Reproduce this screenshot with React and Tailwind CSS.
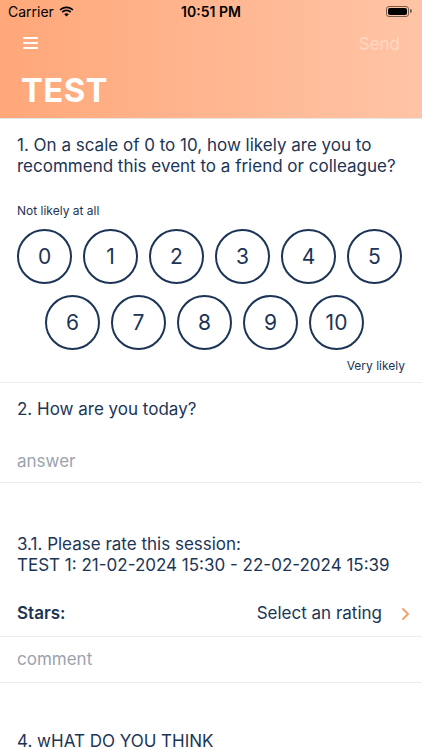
import React from 'react';

const navy = 'text-[#1c3556]';

function StatusBar() {
  return (
    <div className="h-[22px] flex items-center justify-between px-[8px] text-black text-[14px]">
      <div className="flex items-center gap-[5px] w-[120px]">
        <span>Carrier</span>
        {/* wifi */}
        <svg width="15" height="11" viewBox="0 0 15 11">
          <path d="M7.5 2.2c2.3 0 4.4.9 5.9 2.4l1.1-1.1C12.7 1.7 10.2.6 7.5.6S2.3 1.7.5 3.5l1.1 1.1C3.1 3.1 5.2 2.2 7.5 2.2z" fill="#000" />
          <path d="M7.5 5.2c1.4 0 2.7.6 3.7 1.5l1.1-1.1C11.1 4.4 9.4 3.6 7.5 3.6S3.9 4.4 2.7 5.6l1.1 1.1c1-.9 2.3-1.5 3.7-1.5z" fill="#000" />
          <path d="M7.5 10.6l2.3-2.3c-.6-.6-1.4-1-2.3-1s-1.7.4-2.3 1z" fill="#000" />
        </svg>
      </div>
      <span className="font-semibold">10:51 PM</span>
      <div className="w-[120px] flex justify-end pr-[2px]">
        <div className="flex items-center">
          <div className="w-[23px] h-[11px] rounded-[3px] border border-[#7a5a4a] p-[1px]">
            <div className="w-full h-full rounded-[2px] bg-black" />
          </div>
          <div className="w-[1.5px] h-[4px] bg-[#7a5a4a] rounded-r-sm ml-[1px]" />
        </div>
      </div>
    </div>
  );
}

function Header() {
  return (
    <div className="bg-gradient-to-r from-[#ffa779] to-[#ffc4a6] border-b border-[#e6e6e6]">
      <StatusBar />
      <div className="h-[42px] flex items-center justify-between pl-[23px] pr-[22px]">
        <div className="flex flex-col gap-[3px] w-[15px] -mt-[1px]">
          <div className="h-[2px] bg-white rounded" />
          <div className="h-[2px] bg-white rounded" />
          <div className="h-[2px] bg-white rounded" />
        </div>
        <span className="text-[17px] text-white/40 mt-[3px]">Send</span>
      </div>
      <div className="h-[54px] flex items-center px-[21px]">
        <h1 className="text-[33px] font-bold text-white tracking-[0.3px]">TEST</h1>
      </div>
    </div>
  );
}

function Circle({ n }) {
  return (
    <div className={`w-[55px] h-[55px] rounded-full border-2 border-[#1c3556] flex items-center justify-center text-[21px] ${navy}`}>
      {n}
    </div>
  );
}

export default function App() {
  return (
    <div className="min-h-screen bg-white" style={{ fontFamily: 'Inter, "Noto Sans", sans-serif' }}>
      <Header />

      {/* question 1 */}
      <div className="px-[17px] pt-[16px] pb-[7px] border-b border-[#ececec]">
        <p className={`text-[17px] leading-[21px] ${navy}`}>
          1. On a scale of 0 to 10, how likely are you to recommend this event to a friend or colleague?
        </p>
        <p className={`text-[12px] mt-[25px] ${navy}`}>Not likely at all</p>
        <div className="mt-[9px] flex flex-col items-center gap-[11px]">
          <div className="flex gap-[11px] pr-[3px]">
            {[0, 1, 2, 3, 4, 5].map(n => <Circle key={n} n={n} />)}
          </div>
          <div className="flex gap-[11px] pr-[13px]">
            {[6, 7, 8, 9, 10].map(n => <Circle key={n} n={n} />)}
          </div>
        </div>
        <p className={`text-[12px] text-right mt-[7px] ${navy}`}>Very likely</p>
      </div>

      {/* question 2 */}
      <div className="px-[17px] border-b border-[#ececec]">
        <p className={`text-[17px] pt-[14px] ${navy}`}>2. How are you today?</p>
        <p className="text-[17px] text-[#9aa3ae] pt-[26px] pb-[8px]">answer</p>
      </div>

      {/* question 3 */}
      <div className="pt-[51px]">
        <p className={`px-[17px] text-[17px] leading-[21px] ${navy}`}>
          3.1. Please rate this session:
          <br />
          TEST 1: 21-02-2024 15:30 - 22-02-2024 15:39
        </p>
        <div className="mt-[16px] h-[45px] flex items-center justify-between pl-[17px] pr-[12px] border-b border-[#ececec]">
          <span className={`text-[17px] font-semibold ${navy}`}>Stars:</span>
          <div className="flex items-center gap-[19px]">
            <span className={`text-[17px] ${navy}`}>Select an rating</span>
            <svg width="9" height="14" viewBox="0 0 9 14">
              <path d="M2 2l5 5-5 5" fill="none" stroke="#f4a36f" strokeWidth="2" strokeLinecap="round" strokeLinejoin="round" />
            </svg>
          </div>
        </div>
        <div className="h-[46px] flex items-center px-[17px] border-b border-[#ececec]">
          <span className="text-[17px] text-[#9aa3ae]">comment</span>
        </div>
      </div>

      {/* question 4 */}
      <div className="px-[17px] pt-[46px]">
        <p className={`text-[17px] ${navy}`}>4. wHAT DO YOU THINK</p>
      </div>
    </div>
  );
}
